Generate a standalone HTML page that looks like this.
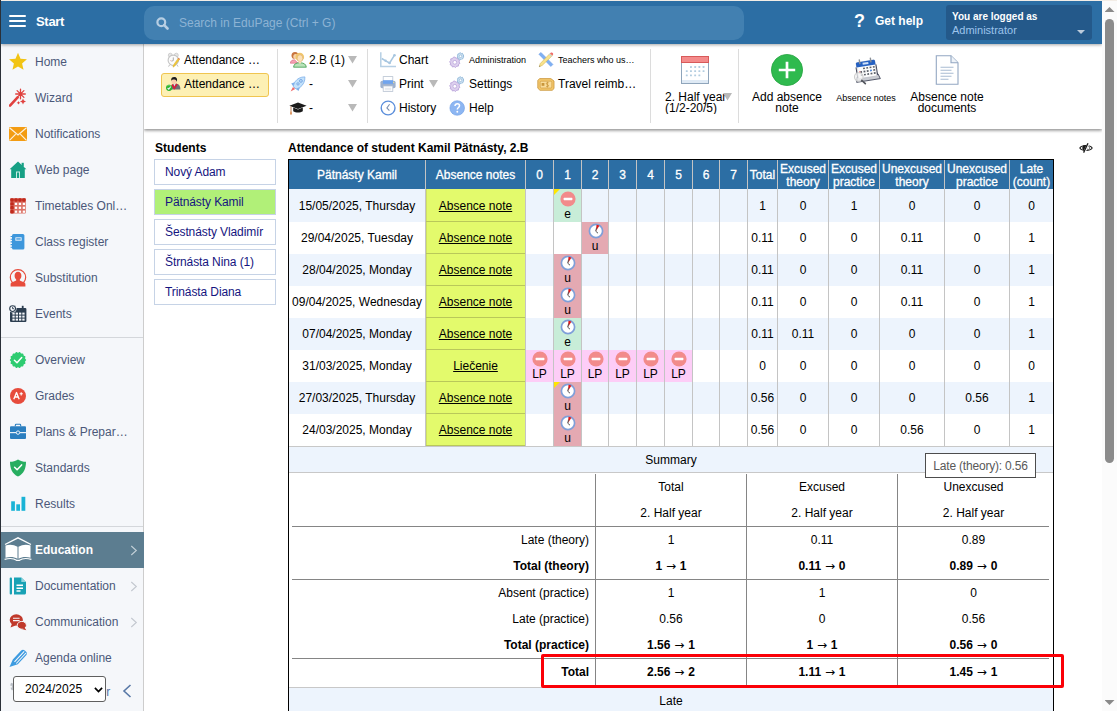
<!DOCTYPE html>
<html lang="en">
<head>
<meta charset="utf-8">
<title>EduPage - Attendance</title>
<style>
*{box-sizing:border-box;margin:0;padding:0}
html,body{width:1117px;height:711px;overflow:hidden;background:#fff}
body{font-family:"Liberation Sans",sans-serif;font-size:12px;color:#000;position:relative}
.abs{position:absolute}
#edgeL{left:0;top:0;width:1px;height:711px;background:#2a3038;z-index:50}
#edgeT{left:1px;top:0;width:1116px;height:1px;background:#f3ede6;z-index:50}
/* header */
#hdr{left:1px;top:1px;width:1101px;height:43px;background:#2c6ea4;z-index:20;box-shadow:0 1px 3px rgba(0,0,0,.35)}
#hdr .ham{left:8px;top:14px;width:17px;height:2px;background:#fff;box-shadow:0 5px 0 #fff,0 10px 0 #fff;border-radius:1px}
#hdr .start{left:35px;top:12.500px;font-weight:bold;font-size:13px;color:#fff;letter-spacing:-.3px;line-height:16px}
#srch{left:143px;top:5px;width:600px;height:34px;border-radius:10px;background:#4280b1}
#srch .ph{left:35px;top:9px;font-size:12px;line-height:16px;color:#8db3d4}
#help{left:853px;top:12px;color:#fff;font-weight:bold;font-size:12px;line-height:16px}
#qm{left:853px;top:9px;color:#fff;font-weight:bold;font-size:18px;line-height:22px}
#user{left:945px;top:4px;width:146px;height:35px;background:#24598a;border-radius:3px}
#user .l1{left:6px;top:4.500px;color:#fff;font-weight:bold;font-size:10px;line-height:13px}
#user .l2{left:6px;top:18px;color:#9cc4ec;font-size:11px;line-height:14px}
#user .car{left:130.500px;top:24.500px;width:0;height:0;border:4px solid transparent;border-top:4.500px solid #bccbdb;border-bottom:0}
/* scrollbar */
#sb{left:1102px;top:0;width:15px;height:711px;background:#fbfbfb;z-index:30}
#sb .thumb{left:3px;top:19px;width:9px;height:444px;background:#8b8b8b;border-radius:4.5px}
#sb .up{left:2.500px;top:7px;width:10px;height:5px;background:#8a8a8a;clip-path:polygon(50% 0,100% 100%,0 100%)}
#sb .dn{left:2.500px;top:700px;width:10px;height:5px;background:#8a8a8a;clip-path:polygon(0 0,100% 0,50% 100%)}
/* sidebar */
#side{left:1px;top:44px;width:143px;height:667px;background:#f5f7fa;border-right:1px solid #cdcdcd;z-index:10}
.mi{position:absolute;left:0;width:142px;height:36px}
.mi .t{position:absolute;left:34px;top:10px;font-size:12px;line-height:16px;color:#4b5879;white-space:nowrap}
.mi svg{position:absolute;left:8px;top:8px;width:20px;height:20px}
#edu svg{left:3px;top:5px;width:28px;height:25px}
.mi svg.ch,#edu svg.ch{left:129px;top:13px;width:8px;height:11px}
#edu{width:143px}
.sep{position:absolute;left:0;width:142px;height:1px;background:#d4d7db}
#edu{background:#5c7d90}
#edu .t{color:#fff;font-weight:bold}
/* toolbar */
#tb{left:144px;top:44px;width:958px;height:85px;background:#fff;z-index:9;box-shadow:0 1.500px 3px rgba(0,0,0,.45)}
.vs{position:absolute;top:5px;width:1px;height:74px;background:#dcdcdc}
.tbi{position:absolute;font-size:12px;line-height:16px;white-space:nowrap;color:#000}
.tbi.s{font-size:9px}
.dd{position:absolute;width:9px;height:7.500px;background:#b9b9b9;clip-path:polygon(0 0,100% 0,50% 100%)}
.ic{position:absolute;z-index:2}
.big{position:absolute;font-size:12px;line-height:11px;text-align:center;color:#000}
.big.s{font-size:9px}
.stu{position:absolute;left:10px;width:122px;height:26px;border:1px solid #c6d3e6;background:#fff;color:#151580;font-size:12px;line-height:16px;padding:4px 0 0 10px;white-space:nowrap;letter-spacing:-.1px}
.stu.sel{background:#b1f078}
#frame{position:absolute;left:144px;top:32px;width:766px;height:560px;border:1px solid #000;border-bottom:0;background:#fff}
#mt{position:absolute;left:145px;top:33px;width:764px;table-layout:fixed;border-collapse:separate;border-spacing:0;font-size:12px}
#mt th{height:29px;background:#2c6ea4;color:#fff;font-weight:normal;font-size:12px;line-height:13px;border-right:1px solid #c4c4c4;text-align:center;vertical-align:middle;padding:2px 0 0;-webkit-text-stroke:.3px #fff;white-space:nowrap;overflow:hidden}
#mt th:last-child,#mt td:last-child{border-right:0}
#mt tbody tr:first-child td{height:33px}
#mt tbody tr:first-child td.m .i16{top:2px}
#mt tbody tr:first-child td.m span{top:18px}
#mt td{height:32px;border-right:1px solid #c4c4c4;text-align:center;vertical-align:middle;padding:0;line-height:14px;white-space:nowrap;position:relative;overflow:hidden}
#mt tr.o td{background:#edf4fd}
#mt tr.e td{background:#fff}
#mt td.y{background:#e3fa6c !important;box-shadow:inset 0 -1px 0 #b9c85a,inset 1px 0 0 #cfe062}
#mt td.y a{text-decoration:underline;color:#000}
#mt td.m{vertical-align:top}
#mt td.m.g{background:#c8edd8 !important}
#mt td.m.p{background:#e4a9b2 !important}
#mt td.m.l{background:#fdcdf7 !important}
#mt td.m .i16{position:absolute;left:5.500px;top:1px;width:16px;height:16px}
#mt td.m span{position:absolute;left:0;right:0;top:17px;line-height:14px;text-align:center}
#mt td.m .tri{position:absolute;left:0;top:0;width:0;height:0;border-top:6px solid #ffe600;border-right:6px solid transparent}
.band{position:absolute;left:145px;width:764px;height:27px;background:#edf4fd;border-top:1px solid #c8c8c8;border-bottom:1px solid #c8c8c8;text-align:center;font-size:12px;line-height:27px}
#st{position:absolute;left:148px;top:347px;width:757px;table-layout:fixed;border-collapse:separate;border-spacing:0;font-size:12px}
#st td{height:26px;padding:0;text-align:center;vertical-align:middle;line-height:14px;border-right:1px solid #858585;white-space:nowrap}
#st td:first-child{text-align:right;padding-right:6px}
#st .ar{font-family:"DejaVu Sans",sans-serif;font-size:12px;font-weight:normal;line-height:10px;margin:0 .5px}
#st td:last-child{border-right:0}
#st tr.b td{font-weight:bold}
#st tr.l td{border-bottom:1px solid #858585;height:27px}
#st tr.h td:first-child{border-bottom-color:#858585}
#st tr.t td{height:28px;padding-bottom:2px}
#tip{position:absolute;left:781px;top:326px;width:111px;height:25px;border:1px solid #4d4d4d;background:#fff;color:#595959;font-size:12px;letter-spacing:-.2px;line-height:24px;text-align:center;white-space:nowrap;z-index:5}
#red{position:absolute;left:397px;top:527px;width:523px;height:34px;border:3px solid #fb0007;border-radius:2px;z-index:6}
#yr{left:12px;top:632px;width:93px;height:26px;background:#fff;border:1px solid #5f5f5f;border-radius:3px;font-size:12px;line-height:24px;padding-left:11px;color:#000;z-index:3;letter-spacing:.05px}
#mt tbody tr:first-child td.m .i16{top:2px}
#mt tbody tr:first-child td.m span{top:18px}
</style>
</head>
<body>
<div id="edgeL" class="abs"></div>
<div id="edgeT" class="abs"></div>

<!-- HEADER -->
<div id="hdr" class="abs">
  <div class="ham abs"></div>
  <div class="start abs">Start</div>
  <div id="srch" class="abs">
    <svg class="abs" style="left:12px;top:11px" width="13" height="13" viewBox="0 0 13 13"><circle cx="5.300" cy="5.300" r="3.900" fill="none" stroke="#b7cee3" stroke-width="2.200"/><path d="M8.200 8.200l3.300 3.300" stroke="#b7cee3" stroke-width="2.600" stroke-linecap="round"/></svg>
    <div class="ph abs">Search in EduPage (Ctrl + G)</div>
  </div>
  <div id="qm" class="abs">?</div>
  <div id="help" class="abs" style="left:874px">Get help</div>
  <div id="user" class="abs">
    <div class="l1 abs">You are logged as</div>
    <div class="l2 abs">Administrator</div>
    <div class="car abs"></div>
  </div>
</div>

<!-- SCROLLBAR -->
<div id="sb" class="abs"><div class="up abs"></div><div class="thumb abs"></div><div class="dn abs"></div></div>

<!-- SIDEBAR -->
<div id="side" class="abs">
  <div class="mi" style="top:0"><svg viewBox="0 0 20 20"><polygon points="9.00,0.80 11.53,6.72 17.94,7.30 13.09,11.53 14.53,17.80 9.00,14.50 3.47,17.80 4.91,11.53 0.06,7.30 6.47,6.72" fill="#f2c414"/></svg><span class="t">Home</span></div>
  <div class="mi" style="top:36px"><svg viewBox="0 0 20 20"><path d="M1 17.6L8.6 9.4" stroke="#e0413f" stroke-width="2.6" stroke-linecap="round"/><g stroke="#e0413f" stroke-width="1.3" stroke-linecap="round"><path d="M11.5 1.2V10.8M6.7 6H16.3M8.1 2.6L14.9 9.4M14.9 2.6L8.1 9.4"/></g><path d="M14 10.5l.9 2.1 2.1.9-2.1.9-.9 2.1-.9-2.1-2.1-.9 2.1-.9zM9.5 13l.6 1.2 1.2.6-1.2.6-.6 1.2-.6-1.2-1.2-.6 1.2-.6z" fill="#e0413f"/></svg><span class="t">Wizard</span></div>
  <div class="mi" style="top:72px"><svg viewBox="0 0 20 20"><rect x="0" y="3" width="18" height="14" rx=".8" fill="#f39c12"/><path d="M.5 3.8L9 11l8.500-7.200M.5 16.400l6.200-6.200M17.500 16.400l-6.200-6.200" fill="none" stroke="#fdf1dc" stroke-width="1.200"/></svg><span class="t">Notifications</span></div>
  <div class="mi" style="top:108px"><svg viewBox="0 0 20 20"><path d="M9 1.500L0.600 9.300H2.200V18H15.800V9.300H17.400Z" fill="#17a085"/><rect x="12.600" y="2.800" width="2.200" height="4" fill="#17a085"/><rect x="7" y="11.500" width="4" height="6.500" fill="#c9ece4"/><rect x="8" y="12.500" width="2" height="5.500" fill="#17a085"/></svg><span class="t">Web page</span></div>
  <div class="mi" style="top:144px"><svg viewBox="0 0 20 20"><rect x="1.200" y="2.200" width="15.600" height="15.400" rx=".8" fill="#dc7468"/><rect x="1.30" y="2.30" width="3.500" height="3.400" rx=".9" fill="#c12a1c"/><rect x="5.25" y="2.30" width="3.500" height="3.400" rx=".9" fill="#c12a1c"/><rect x="9.20" y="2.30" width="3.500" height="3.400" rx=".9" fill="#c12a1c"/><rect x="13.15" y="2.30" width="3.500" height="3.400" rx=".9" fill="#c12a1c"/><rect x="1.30" y="6.20" width="3.500" height="3.400" rx=".9" fill="#c12a1c"/><rect x="5.85" y="6.80" width="2.300" height="2.200" fill="#fff"/><rect x="9.80" y="6.80" width="2.300" height="2.200" fill="#fff"/><rect x="13.75" y="6.80" width="2.300" height="2.200" fill="#fff"/><rect x="1.30" y="10.10" width="3.500" height="3.400" rx=".9" fill="#c12a1c"/><rect x="5.85" y="10.70" width="2.300" height="2.200" fill="#fff"/><rect x="9.80" y="10.70" width="2.300" height="2.200" fill="#fff"/><rect x="13.75" y="10.70" width="2.300" height="2.200" fill="#fff"/><rect x="1.30" y="14.00" width="3.500" height="3.400" rx=".9" fill="#c12a1c"/><rect x="5.85" y="14.60" width="2.300" height="2.200" fill="#fff"/><rect x="9.80" y="14.60" width="2.300" height="2.200" fill="#fff"/><rect x="13.75" y="14.60" width="2.300" height="2.200" fill="#fff"/></svg><span class="t">Timetables Onl&hellip;</span></div>
  <div class="mi" style="top:180px"><svg viewBox="0 0 20 20"><rect x="3" y="2" width="12.400" height="15.500" rx="1.500" fill="#3d97dc"/><rect x="6.300" y="5.300" width="6.400" height="3.400" rx=".5" fill="#dcecf9"/><rect x="7.300" y="6.300" width="4.400" height="1.300" fill="#3d97dc"/><g stroke="#3d97dc" stroke-width="1.100"><path d="M1.600 4.500h2M1.600 7.200h2M1.600 9.900h2M1.600 12.600h2M1.600 15.300h2"/></g></svg><span class="t">Class register</span></div>
  <div class="mi" style="top:216px"><svg viewBox="0 0 20 20"><circle cx="9" cy="9.300" r="7.700" fill="none" stroke="#e74c3c" stroke-width="1.200"/><path d="M9 3.800c2.200 0 3.400 1.700 3.400 3.900 0 1.700-.7 3-1.600 3.700v1.100l4.500 2c.8.400 1.100 1.100 1.100 2v2.300H1.600v-2.300c0-.9.300-1.600 1.100-2l4.500-2v-1.100C6.300 10.700 5.600 9.400 5.600 7.700c0-2.200 1.200-3.900 3.400-3.900z" fill="#e74c3c"/><rect x="0" y="18.700" width="20" height="1.300" fill="#f5f7fa"/></svg><span class="t">Substitution</span></div>
  <div class="mi" style="top:252px"><svg viewBox="0 0 20 20"><rect x="1" y="4" width="16.400" height="14" rx="1" fill="#2c3e50"/><rect x="5" y="1.800" width="1.800" height="4" fill="#2c3e50"/><rect x="12.800" y="1.800" width="1.800" height="4" fill="#2c3e50"/><rect x="3.4" y="8.6" width="2.300" height="2" fill="#f5f7fa"/><rect x="6.7" y="8.6" width="2.300" height="2" fill="#f5f7fa"/><rect x="10.0" y="8.6" width="2.300" height="2" fill="#f5f7fa"/><rect x="13.3" y="8.6" width="2.300" height="2" fill="#f5f7fa"/><rect x="3.4" y="11.6" width="2.300" height="2" fill="#f5f7fa"/><rect x="6.7" y="11.6" width="2.300" height="2" fill="#f5f7fa"/><rect x="10.0" y="11.6" width="2.300" height="2" fill="#f5f7fa"/><rect x="13.3" y="11.6" width="2.300" height="2" fill="#f5f7fa"/><rect x="3.4" y="14.6" width="2.300" height="2" fill="#f5f7fa"/><rect x="6.7" y="14.6" width="2.300" height="2" fill="#f5f7fa"/><rect x="10.0" y="14.6" width="2.300" height="2" fill="#f5f7fa"/><rect x="13.3" y="14.6" width="2.300" height="2" fill="#f5f7fa"/><circle cx="3.600" cy="4.600" r="3.900" fill="#f5f7fa"/><circle cx="3.600" cy="4.600" r="2.900" fill="none" stroke="#2c3e50" stroke-width="1.100"/><path d="M3.600 2.900V4.700H5" fill="none" stroke="#2c3e50" stroke-width=".9"/></svg><span class="t">Events</span></div>
  <div class="sep" style="top:293px"></div>
  <div class="mi" style="top:298px"><svg viewBox="0 0 20 20"><polygon points="17.15,10.00 17.01,10.45 16.65,10.86 16.28,11.24 16.07,11.61 16.09,12.04 16.27,12.54 16.41,13.07 16.34,13.54 16.02,13.88 15.52,14.10 15.02,14.27 14.67,14.52 14.50,14.92 14.44,15.44 14.34,15.98 14.08,16.37 13.64,16.54 13.10,16.52 12.57,16.46 12.15,16.53 11.82,16.82 11.54,17.27 11.22,17.70 10.81,17.95 10.34,17.90 9.86,17.65 9.41,17.37 9.00,17.25 8.59,17.37 8.14,17.65 7.66,17.90 7.19,17.95 6.78,17.70 6.46,17.27 6.18,16.82 5.85,16.53 5.43,16.46 4.90,16.52 4.36,16.54 3.92,16.37 3.66,15.98 3.56,15.44 3.50,14.92 3.33,14.52 2.98,14.27 2.48,14.10 1.98,13.88 1.66,13.54 1.59,13.07 1.73,12.54 1.91,12.04 1.93,11.61 1.72,11.24 1.35,10.86 0.99,10.45 0.85,10.00 0.99,9.55 1.35,9.14 1.72,8.76 1.93,8.39 1.91,7.96 1.73,7.46 1.59,6.93 1.66,6.46 1.98,6.12 2.48,5.90 2.98,5.73 3.33,5.48 3.50,5.08 3.56,4.56 3.66,4.02 3.92,3.63 4.36,3.46 4.90,3.48 5.43,3.54 5.85,3.47 6.18,3.18 6.46,2.73 6.78,2.30 7.19,2.05 7.66,2.10 8.14,2.35 8.59,2.63 9.00,2.75 9.41,2.63 9.86,2.35 10.34,2.10 10.81,2.05 11.22,2.30 11.54,2.73 11.82,3.18 12.15,3.47 12.57,3.54 13.10,3.48 13.64,3.46 14.08,3.63 14.34,4.02 14.44,4.56 14.50,5.08 14.67,5.48 15.02,5.73 15.52,5.90 16.02,6.12 16.34,6.46 16.41,6.93 16.27,7.46 16.09,7.96 16.07,8.39 16.28,8.76 16.65,9.14 17.01,9.55" fill="#2ecc71"/><path d="M5.400 10.200L8 12.700L12.700 7.600" fill="none" stroke="#fff" stroke-width="1.500" stroke-linecap="round" stroke-linejoin="round"/></svg><span class="t">Overview</span></div>
  <div class="mi" style="top:334px"><svg viewBox="0 0 20 20"><circle cx="9" cy="10" r="8" fill="#e74c3c"/><path d="M4.800 13.300L7.500 6.500L10.200 13.300M5.800 11h3.400" fill="none" stroke="#fff" stroke-width="1.300" stroke-linejoin="round"/><path d="M10.600 7.800h3.200M12.200 6.200v3.200" stroke="#fff" stroke-width="1.100"/></svg><span class="t">Grades</span></div>
  <div class="mi" style="top:370px"><svg viewBox="0 0 20 20"><path d="M6.300 4.300V3.200c0-.5.400-.9.900-.9h3.600c.5 0 .9.400.9.900v1.100" fill="none" stroke="#2b7fc0" stroke-width="1.100"/><rect x="1" y="4.300" width="16" height="12.700" rx="1" fill="#2b7fc0"/><rect x="1" y="10" width="16" height="1.200" fill="#e8f1f9"/><circle cx="9" cy="10.600" r="1.700" fill="#2b7fc0" stroke="#e8f1f9" stroke-width="1"/></svg><span class="t">Plans &amp; Prepar&hellip;</span></div>
  <div class="mi" style="top:406px"><svg viewBox="0 0 20 20"><path d="M9 1.500C11.500 3.200 14.200 3.800 17 3.800C17 10.500 14.800 16 9 18.500C3.200 16 1 10.500 1 3.800C3.800 3.800 6.500 3.200 9 1.500Z" fill="#27ae60"/><path d="M5.600 9.300L8.100 11.800L12.600 6.900" fill="none" stroke="#fff" stroke-width="1.500" stroke-linecap="round" stroke-linejoin="round"/></svg><span class="t">Standards</span></div>
  <div class="mi" style="top:442px"><svg viewBox="0 0 20 20"><rect x="2.200" y="7.300" width="3.700" height="9.500" fill="#1ab3d6"/><rect x="7.300" y="10.300" width="3.700" height="6.500" fill="#1ab3d6"/><rect x="12.500" y="2.800" width="3.800" height="14" fill="#1ab3d6"/></svg><span class="t">Results</span></div>
  <div class="sep" style="top:482px"></div>
  <div class="mi" id="edu" style="top:488px"><svg viewBox="0 0 28 25"><path d="M1 7.500L14 .8L27 7.500" fill="none" stroke="#fff" stroke-width="1.300"/><path d="M1.500 8.500C5.500 7.200 10 7.600 13.500 9.800V21.800C10 19.800 5.500 19.600 1.500 20.800Z" fill="#fff"/><path d="M26.500 8.500C22.500 7.200 18 7.600 14.500 9.800V21.800C18 19.800 22.500 19.600 26.500 20.800Z" fill="#fff"/><path d="M.6 22.300C5 21.200 10 21.400 12.500 23.300H15.500C18 21.400 23 21.200 27.400 22.300" fill="none" stroke="#fff" stroke-width="1.200"/></svg><span class="t">Education</span><svg class="ch" viewBox="0 0 8 11"><path d="M1.300 1L6.300 5.500L1.300 10" fill="none" stroke="#c3d0d8" stroke-width="1.100"/></svg></div>
  <div class="mi" style="top:524px"><svg viewBox="0 0 20 20"><rect x=".7" y="1.400" width="2.300" height="17" rx="1" fill="#18a2b5"/><path d="M5 1.400h7.300l4.700 4.700v10.800c0 .8-.7 1.500-1.500 1.500H5z" fill="#18a2b5"/><path d="M12.300 1.400v4.700h4.700z" fill="#8fd6df"/><path d="M7.500 9.300h6.500M7.500 12.200h6.500M7.500 15h4" stroke="#fff" stroke-width="1.400"/></svg><span class="t">Documentation</span><svg class="ch" viewBox="0 0 8 11"><path d="M1.300 1L6.300 5.500L1.300 10" fill="none" stroke="#c3c8cf" stroke-width="1.100"/></svg></div>
  <div class="mi" style="top:560px"><svg viewBox="0 0 20 20"><ellipse cx="7.300" cy="8" rx="6.600" ry="5.800" fill="#c0392b"/><path d="M3 11.500L1.500 15.500L6.500 13.500Z" fill="#c0392b"/><ellipse cx="12.800" cy="13.300" rx="4.600" ry="3.900" fill="#c0392b" stroke="#f5f7fa" stroke-width="1"/><path d="M15.500 15.500L17.300 18.200L12.800 17Z" fill="#c0392b"/><path d="M4 6.300h6.600M4 8.600h6.600" stroke="#f5f7fa" stroke-width="1.100"/></svg><span class="t">Communication</span><svg class="ch" viewBox="0 0 8 11"><path d="M1.300 1L6.300 5.500L1.300 10" fill="none" stroke="#c3c8cf" stroke-width="1.100"/></svg></div>
  <div class="mi" style="top:596px"><svg viewBox="0 0 20 20"><path d="M3.800 11.500L12.200 2.600c1-1 2.500-1 3.500-.1l1.400 1.300c1 .9 1 2.500.1 3.500L8.800 16.200L.5 19z" fill="#3d9be0"/><path d="M5.500 13.800L15.200 3.300M7.300 15.500L17 5" stroke="#f5f7fa" stroke-width="1.100"/></svg><span class="t">Agenda online</span></div>
  <svg class="abs" style="left:8px;top:634px" width="16" height="16" viewBox="0 0 16 16"><circle cx="8" cy="8" r="5" fill="none" stroke="#b9bec5" stroke-width="3.400" stroke-dasharray="2.200 1.700"/><circle cx="8" cy="8" r="4.300" fill="none" stroke="#b9bec5" stroke-width="1.800"/></svg>
  <div class="abs" style="left:98.500px;top:640px;font-size:12px;line-height:16px;color:#5575a8">or</div>
  <div id="yr" class="abs">2024/2025<svg class="abs" style="left:80px;top:10px" width="9" height="6" viewBox="0 0 9 6"><path d="M.9 .9L4.500 4.600L8.100 .9" fill="none" stroke="#000" stroke-width="1.700"/></svg></div>
  <svg class="abs" style="left:121px;top:640px" width="10" height="14" viewBox="0 0 10 14"><path d="M8.500 1L2 7L8.500 13" fill="none" stroke="#5878a6" stroke-width="1.600"/></svg>
</div>

<!-- TOOLBAR -->
<div id="tb" class="abs">
<!--TBI--><svg class="ic" style="left:22px;top:8px" width="16" height="16" viewBox="0 0 16 16"><circle cx="4.300" cy="3.200" r="2" fill="#e6e6e6" stroke="#bcbcbc" stroke-width=".6"/><circle cx="10.300" cy="3.200" r="2" fill="#e6e6e6" stroke="#bcbcbc" stroke-width=".6"/><circle cx="7.300" cy="8.300" r="5.200" fill="#fbfbfb" stroke="#c4c4c4" stroke-width="1.100"/><path d="M7.300 5.400V8.500L5.500 9.300" fill="none" stroke="#8a8a8a" stroke-width=".7"/><path d="M5.600 8.600h-1.600" stroke="#e7a0a0" stroke-width=".6"/><path d="M3.600 12.800L2.600 14.600M11 12.800L12 14.600" stroke="#bcbcbc" stroke-width="1"/><path d="M12.400 6L13.800 7L8.600 14.200L7 15.200L7.200 13.300Z" fill="#f3c93a" stroke="#c9a01e" stroke-width=".35"/><path d="M12.400 6L13.800 7L13.300 7.700L11.900 6.700Z" fill="#e36a6a"/></svg>
<svg class="ic" style="left:22px;top:32px" width="16" height="16" viewBox="0 0 16 16"><path d="M5 13.600C5 10.200 6 8 8.400 7.800H10.600C13.200 8.200 14.400 10.200 14.400 13.600Z" fill="#6e7073"/><path d="M5.900 8.600L8.300 12L10.900 8" fill="none" stroke="#d81f3c" stroke-width="1.900"/><path d="M7.600 7.800L8.400 10.400L9.600 7.800Z" fill="#e8e8ee"/><g transform="translate(0 .5)"><ellipse cx="8" cy="4.700" rx="2.600" ry="3" fill="#fbd0ae"/><path d="M5.200 4.200C4.800 1.600 6.400.6 8.300.6C10.600.6 11.600 2.400 10.900 5.400C10.600 3.800 9.800 3 8.400 2.900C7 2.800 5.900 3.200 5.200 4.200Z" fill="#1c1c1c"/></g><circle cx="3.100" cy="11.800" r="3.100" fill="#2cb52c"/><path d="M.9 10.400A2.600 2.600 0 0 1 4.800 9.600" fill="none" stroke="#8fd88f" stroke-width=".8"/><path d="M1.600 12L2.800 13.200L4.800 10.500" fill="none" stroke="#eef" stroke-width="1.100"/></svg>
<svg class="ic" style="left:146px;top:7px" width="17" height="17" viewBox="0 0 17 17"><path d="M.3 12.200C.6 9.800 2.200 8.800 4.600 8.800L8 12.200Z" fill="#f5a3b3" stroke="#d9607a" stroke-width=".6"/><circle cx="5" cy="4.600" r="3.500" fill="#c8733d"/><ellipse cx="5.600" cy="5.600" rx="2.300" ry="2.700" fill="#f7d3a8"/><path d="M3.600 16.200C3.900 13 5.800 11.800 9.800 11.800C13.800 11.800 15.900 13 16.300 16.200Z" fill="#b9e3b9" stroke="#3f9a4c" stroke-width=".8"/><circle cx="9.800" cy="6" r="4.300" fill="#f0c56c"/><ellipse cx="10" cy="7.300" rx="2.800" ry="3.500" fill="#fbe0b8" stroke="#d9a860" stroke-width=".5"/><rect x="8.800" y="10.500" width="2.300" height="2" fill="#fbe0b8"/></svg>
<svg class="ic" style="left:146px;top:32px" width="16" height="16" viewBox="0 0 16 16"><path d="M14.900 .9C10.600 .8 7.200 2.600 4.700 6.200L3.200 10.200L6 13L9.900 11.500C13.500 8.800 15.100 5 14.900.9Z" fill="#c3e2fb" stroke="#7fb0ea" stroke-width=".8"/><circle cx="10.900" cy="4.900" r="1.400" fill="#c3e2fb" stroke="#6f9fe0" stroke-width=".9"/><circle cx="8" cy="7.900" r="1.200" fill="#c3e2fb" stroke="#6f9fe0" stroke-width=".8"/><path d="M4.700 6.200L1.200 7.600L3.200 10.200ZM9.900 11.500L8.500 15L6 13Z" fill="#7fb0ea"/><path d="M3 11L.6 15.400L5.200 13.100Z" fill="#ee6e6e"/></svg>
<svg class="ic" style="left:145px;top:58px" width="18" height="13" viewBox="0 0 18 13"><path d="M9 .6L17.600 3.800L9 7L.4 3.800Z" fill="#1b1b1b"/><path d="M4.200 5.600V9.200C6.600 11 11.400 11 13.800 9.200V5.600L9 7.500Z" fill="#1b1b1b"/><path d="M2 4.400V9.300" stroke="#b06a3a" stroke-width=".8"/><path d="M1.300 9.300h1.400l.3 3.300H1z" fill="#d98f5a"/></svg>
<svg class="ic" style="left:236px;top:8px" width="16" height="16" viewBox="0 0 16 16"><path d="M.8 .2V14.600H16" fill="none" stroke="#b6cfe4" stroke-width="1.500"/><path d="M1.800 6.500L5.600 8.800L9.600 11L14.500 3.200" fill="none" stroke="#a7c6e0" stroke-width="1.500" stroke-linejoin="round"/><circle cx="5.600" cy="8.800" r="1.200" fill="#a7c6e0"/><circle cx="9.600" cy="11" r="1.300" fill="#a7c6e0"/><circle cx="14.500" cy="3.200" r="1.300" fill="#a7c6e0"/></svg>
<svg class="ic" style="left:236px;top:32px" width="16" height="16" viewBox="0 0 16 16"><rect x="3.200" y=".6" width="9.600" height="5.400" fill="#fff" stroke="#b9c4d2" stroke-width=".8"/><rect x=".4" y="4.800" width="15.200" height="7.400" rx="1.800" fill="#9db1cf"/><rect x="3" y="4.200" width="10" height="3.600" fill="#6fa4ee"/><rect x="3.200" y="10" width="9.600" height="5.400" fill="#fff" stroke="#b9c4d2" stroke-width=".8"/><path d="M4.800 12.300h6.400M4.800 13.800h6.400" stroke="#d3dae3" stroke-width=".7"/><circle cx="13.700" cy="6.400" r=".6" fill="#f7e68a"/></svg>
<svg class="ic" style="left:236px;top:56px" width="16" height="16" viewBox="0 0 16 16"><circle cx="8.100" cy="8" r="6.900" fill="#fff" stroke="#5b8edb" stroke-width="1.400"/><path d="M9.600 4.300L6.900 8L9.400 10.600" fill="none" stroke="#7b8fb0" stroke-width="1.100"/></svg>
<svg class="ic" style="left:305px;top:8px" width="16" height="16" viewBox="0 0 16 16"><g transform="translate(5.800 10.300)"><path d="M0-5.200L1.300-4.100L3-4.500L3.300-2.800L4.900-2L4.200-.4L5.100 1.100L3.700 2.100L3.600 3.800L1.900 3.900L.7 5.200L-.7 4.200L-2.400 4.700L-3 3.100L-4.600 2.500L-4.200.8L-5.200-.5L-4-1.700L-4.100-3.400L-2.400-3.700L-1.400-5.100Z" fill="#ddd0ee" stroke="#b9a3da" stroke-width=".9"/><circle r="1.900" fill="#fff" stroke="#b9a3da" stroke-width=".8"/></g><g transform="translate(11.500 4.300) scale(.66)"><path d="M0-5.200L1.300-4.100L3-4.500L3.300-2.800L4.900-2L4.200-.4L5.100 1.100L3.700 2.100L3.600 3.800L1.900 3.900L.7 5.200L-.7 4.200L-2.400 4.700L-3 3.100L-4.600 2.500L-4.200.8L-5.200-.5L-4-1.700L-4.100-3.400L-2.400-3.700L-1.400-5.100Z" fill="#cfe2f2" stroke="#8db6d8" stroke-width="1.300"/><circle r="2" fill="#fff" stroke="#8db6d8" stroke-width="1.100"/></g></svg>
<svg class="ic" style="left:305px;top:32px" width="16" height="16" viewBox="0 0 16 16"><g transform="translate(5.800 10.300)"><path d="M0-5.200L1.300-4.100L3-4.500L3.300-2.800L4.900-2L4.200-.4L5.100 1.100L3.700 2.100L3.600 3.800L1.900 3.900L.7 5.200L-.7 4.200L-2.400 4.700L-3 3.100L-4.600 2.500L-4.200.8L-5.200-.5L-4-1.700L-4.100-3.400L-2.400-3.700L-1.400-5.100Z" fill="#ddd0ee" stroke="#b9a3da" stroke-width=".9"/><circle r="1.900" fill="#fff" stroke="#b9a3da" stroke-width=".8"/></g><g transform="translate(11.500 4.300) scale(.66)"><path d="M0-5.200L1.300-4.100L3-4.500L3.300-2.800L4.900-2L4.200-.4L5.100 1.100L3.700 2.100L3.600 3.800L1.900 3.900L.7 5.200L-.7 4.200L-2.400 4.700L-3 3.100L-4.600 2.500L-4.200.8L-5.200-.5L-4-1.700L-4.100-3.400L-2.400-3.700L-1.400-5.100Z" fill="#cfe2f2" stroke="#8db6d8" stroke-width="1.300"/><circle r="2" fill="#fff" stroke="#8db6d8" stroke-width="1.100"/></g></svg>
<svg class="ic" style="left:305px;top:56px" width="16" height="16" viewBox="0 0 16 16"><circle cx="8.200" cy="8" r="7.300" fill="#8db6f2" stroke="#6f9fe6" stroke-width=".6"/><path d="M6 6.100C6 4.600 7 3.800 8.300 3.800C9.600 3.800 10.500 4.600 10.500 5.800C10.500 7.500 8.300 7.500 8.300 9.500" fill="none" stroke="#fff" stroke-width="1.500"/><circle cx="8.300" cy="11.800" r=".95" fill="#fff"/></svg>
<svg class="ic" style="left:394px;top:8px" width="16" height="16" viewBox="0 0 16 16"><path d="M.8 2.200L3 .4L15 12.400L12.800 14.600Z" fill="#7fb0f3" stroke="#5d93e0" stroke-width=".4"/><path d="M12 1.400L14.400 3.600L4.200 13.400L1.300 14.700L2.200 11.600Z" fill="#f9e38c" stroke="#cfae45" stroke-width=".5"/><path d="M12 1.400L13 .6C13.600.2 14.300.4 14.800 1C15.300 1.600 15.400 2.200 15 2.800L14.400 3.600Z" fill="#ef6b6b"/><path d="M11.200 2.200L13.600 4.400" stroke="#bfd2e6" stroke-width="1.100"/><path d="M1.300 14.700L2.400 14.200L1.700 13.500Z" fill="#444"/></svg>
<svg class="ic" style="left:393px;top:34px" width="18" height="13" viewBox="0 0 18 13"><path d="M2.600 .6H13.800L17 3V10.600L15.200 12.300H3L.8 10.200V2.400Z" fill="#f3c76c" stroke="#c9963a" stroke-width=".8"/><rect x="3.200" y="3.200" width="11.600" height="6.800" rx="1" fill="#f9dc9a" stroke="#c9963a" stroke-width=".6"/><rect x="4.600" y="5" width="2.800" height="2.800" fill="#c9963a"/><path d="M11.600 4.800C10.600 4.300 9.300 4.600 9.300 5.600C9.300 6.800 11.600 6.400 11.600 7.700C11.600 8.700 10.200 8.900 9.200 8.300M10.400 3.800V9.400" fill="none" stroke="#c9963a" stroke-width=".8"/></svg>
<svg class="ic" style="left:537px;top:12px" width="28" height="28" viewBox="0 0 28 28"><rect x=".5" y="6.500" width="27" height="21" fill="#fff" stroke="#8fa5bb" stroke-width="1"/><rect x="1" y="24" width="26" height="3" fill="#dfeaf5"/><rect x=".5" y=".5" width="27" height="6" fill="#f48b8b" stroke="#d85a5a" stroke-width="1"/><rect x="9" y="10" width="1.900" height="1.900" rx=".4" fill="#b3cde0"/><rect x="13.2" y="10" width="1.900" height="1.900" rx=".4" fill="#b3cde0"/><rect x="17.4" y="10" width="1.900" height="1.900" rx=".4" fill="#b3cde0"/><rect x="21.6" y="10" width="1.900" height="1.900" rx=".4" fill="#b3cde0"/><rect x="4.8" y="14.2" width="1.900" height="1.900" rx=".4" fill="#b3cde0"/><rect x="9" y="14.2" width="1.900" height="1.900" rx=".4" fill="#b3cde0"/><rect x="13.2" y="14.2" width="1.900" height="1.900" rx=".4" fill="#b3cde0"/><rect x="17.4" y="14.2" width="1.900" height="1.900" rx=".4" fill="#b3cde0"/><rect x="21.6" y="14.2" width="1.900" height="1.900" rx=".4" fill="#b3cde0"/><rect x="4.8" y="18.4" width="1.900" height="1.900" rx=".4" fill="#b3cde0"/><rect x="9" y="18.4" width="1.900" height="1.900" rx=".4" fill="#b3cde0"/><rect x="13.2" y="18.4" width="1.900" height="1.900" rx=".4" fill="#b3cde0"/><rect x="17.4" y="18.4" width="1.900" height="1.900" rx=".4" fill="#b3cde0"/></svg>
<svg class="ic" style="left:627px;top:10px" width="32" height="32" viewBox="0 0 32 32"><circle cx="16" cy="16" r="15.600" fill="#2fba4e" stroke="#27a443" stroke-width=".8"/><path d="M16 7.800V24.200M7.800 16H24.200" stroke="#fff" stroke-width="2.700"/></svg>
<svg class="ic" style="left:708px;top:12px" width="29" height="30" viewBox="0 0 29 30"><g transform="rotate(-9 15 15)"><path d="M4.200 19.500L25.400 19.500L27 24.600L3 24.600Z" fill="#c9ccd2" stroke="#4a4f62" stroke-width=".9"/><rect x="5.400" y="5.200" width="18.800" height="16.200" rx="1" fill="#fcfcfc" stroke="#b9bcc4" stroke-width=".7"/><path d="M4.700 9.800V20.500M24.900 9.800V20.500" stroke="#3f4458" stroke-width=".9"/><path d="M5.200 6.200c0-.7.500-1.200 1.200-1.200H23.200c.7 0 1.200.5 1.200 1.200V9.800H5.200Z" fill="#2460c2"/><rect x="11.800" y="6.200" width="5.800" height="2" fill="#cfe0f7"/><rect x="8.400" y="2.200" width="1.400" height="5" rx=".7" fill="#8b9097"/><rect x="19.600" y="2.200" width="1.400" height="5" rx=".7" fill="#8b9097"/><rect x="11.5" y="11.2" width="1.800" height="1.600" fill="#5a5f68"/><rect x="14.8" y="11.2" width="1.800" height="1.600" fill="#5a5f68"/><rect x="18.1" y="11.2" width="1.800" height="1.600" fill="#5a5f68"/><rect x="21.4" y="11.2" width="1.800" height="1.600" fill="#5a5f68"/><rect x="8.2" y="14.3" width="1.800" height="1.600" fill="#5a5f68"/><rect x="11.5" y="14.3" width="1.800" height="1.600" fill="#5a5f68"/><rect x="14.8" y="14.3" width="1.800" height="1.600" fill="#5a5f68"/><rect x="18.1" y="14.3" width="1.800" height="1.600" fill="#4f86d6"/><rect x="21.4" y="14.3" width="1.800" height="1.600" fill="#5a5f68"/><rect x="8.2" y="17.4" width="1.800" height="1.600" fill="#5a5f68"/><rect x="11.5" y="17.4" width="1.800" height="1.600" fill="#5a5f68"/><rect x="14.8" y="17.4" width="1.800" height="1.600" fill="#5a5f68"/><rect x="18.1" y="17.4" width="1.800" height="1.600" fill="#5a5f68"/><rect x="21.4" y="17.4" width="1.800" height="1.600" fill="#5a5f68"/><rect x="7" y="14.300" width="1.300" height="1.300" fill="#e86a6a"/></g><circle cx="6.800" cy="21" r="4.300" fill="rgba(245,245,245,.7)" stroke="#cdcdcd" stroke-width="1.100"/><path d="M9.800 24.300L13.300 27.600" stroke="#55585f" stroke-width="1.700" stroke-linecap="round"/></svg>
<svg class="ic" style="left:791px;top:11px" width="24" height="30" viewBox="0 0 24 30"><path d="M1.300 .8H16L23 7.800V29.200H1.300Z" fill="#fff" stroke="#93a7c2" stroke-width="1.100"/><path d="M16 .8V7.800H23" fill="#eef3f9" stroke="#93a7c2" stroke-width="1.100"/><path d="M5.500 12.200H18.500M5.500 15.200H16.500M5.500 18.200H18.500M5.500 21.200H16.500M5.500 24.200H13.500" stroke="#a9bcd2" stroke-width="1.100"/></svg><!--/TBI-->
  <!-- group 1 -->
  <div class="tbi" style="left:40px;top:8px">Attendance &hellip;</div>
  <div class="abs" style="left:17px;top:29px;width:108px;height:24px;background:#fdf0b4;border:1px solid #f0c550;border-radius:3px"></div>
  <div class="tbi" style="left:40px;top:32px">Attendance &hellip;</div>
  <div class="vs" style="left:133px"></div>
  <!-- group 2 -->
  <div class="tbi" style="left:165px;top:8px">2.B (1)</div>
  <div class="tbi" style="left:165px;top:32px">-</div>
  <div class="tbi" style="left:165px;top:56px">-</div>
  <div class="dd" style="left:204px;top:12px"></div>
  <div class="dd" style="left:204px;top:36px"></div>
  <div class="dd" style="left:204px;top:60px"></div>
  <div class="vs" style="left:223px"></div>
  <!-- group 3 -->
  <div class="tbi" style="left:255px;top:8px">Chart</div>
  <div class="tbi" style="left:255px;top:32px">Print</div>
  <div class="dd" style="left:285px;top:36px"></div>
  <div class="tbi" style="left:255px;top:56px">History</div>
  <div class="tbi s" style="left:325px;top:8px">Administration</div>
  <div class="tbi" style="left:325px;top:32px">Settings</div>
  <div class="tbi" style="left:325px;top:56px">Help</div>
  <div class="tbi s" style="left:414px;top:8px">Teachers who us&hellip;</div>
  <div class="tbi" style="left:414px;top:32px">Travel reimb&hellip;</div>
  <div class="vs" style="left:506px"></div>
  <!-- group 4 -->
  <div class="big" style="left:521px;top:48px;width:61px;text-align:left;overflow:hidden;white-space:nowrap">2. Half year<br>(1/2-20/5)</div>
  <div class="dd" style="left:579px;top:49px"></div>
  <div class="vs" style="left:594px"></div>
  <div class="big" style="left:598px;top:48px;width:90px">Add absence<br>note</div>
  <div class="big s" style="left:677px;top:49px;width:90px">Absence notes</div>
  <div class="big" style="left:753px;top:48px;width:100px">Absence note<br>documents</div>
</div>

<!-- CONTENT -->
<div id="content" class="abs" style="left:144px;top:127px;width:957px;height:584px">
  <div class="abs" style="left:11px;top:13px;font-weight:bold;font-size:12px;line-height:16px">Students</div>
  <div class="stu" style="top:32px">Nov&yacute; Adam</div>
  <div class="stu sel" style="top:62px">P&auml;tn&aacute;sty Kamil</div>
  <div class="stu" style="top:92px">&Scaron;estn&aacute;sty Vladim&iacute;r</div>
  <div class="stu" style="top:122px">&Scaron;trn&aacute;sta Nina (1)</div>
  <div class="stu" style="top:152px">Trin&aacute;sta Diana</div>
  <div class="abs" style="left:144px;top:13px;font-weight:bold;font-size:12px;line-height:16px;white-space:nowrap">Attendance of student Kamil P&auml;tn&aacute;sty, 2.B</div>
  <div id="frame"></div>
<svg class="abs" style="left:935px;top:16px" width="14" height="10" viewBox="0 0 14 10"><path d="M.8 5C3 1.700 11 1.700 13.200 5C11 8.300 3 8.300.8 5Z" fill="#fff" stroke="#1a1a1a" stroke-width="1.100"/><path d="M4.800 2.300C2.800 3 2.800 7 4.800 7.700L7.700 2.200Z" fill="#1a1a1a"/><circle cx="9.200" cy="5" r="1.500" fill="none" stroke="#555" stroke-width=".7"/><path d="M9.600 .3L5.200 9.600" stroke="#fff" stroke-width="2.200"/><path d="M9 .3L4.600 9.600" stroke="#1a1a1a" stroke-width="1.300"/></svg>
<!--MAIN-->
<table id="mt" cellspacing="0" cellpadding="0"><colgroup><col style="width:137px"><col style="width:100px"><col style="width:28px"><col style="width:28px"><col style="width:27px"><col style="width:28px"><col style="width:28px"><col style="width:28px"><col style="width:27px"><col style="width:28px"><col style="width:30px"><col style="width:51px"><col style="width:51px"><col style="width:65px"><col style="width:65px"><col style="width:43px"></colgroup>
<thead><tr><th>P&auml;tn&aacute;sty Kamil</th><th>Absence notes</th><th>0</th><th>1</th><th>2</th><th>3</th><th>4</th><th>5</th><th>6</th><th>7</th><th>Total</th><th>Excused<br>theory</th><th>Excused<br>practice</th><th>Unexcused<br>theory</th><th>Unexcused<br>practice</th><th>Late<br>(count)</th></tr></thead><tbody>
<tr class="o"><td class="d">15/05/2025, Thursday</td><td class="y"><a>Absence note</a></td><td></td><td class="m g"><i class="tri"></i><svg class="i16" viewBox="0 0 16 16"><circle cx="8" cy="8" r="7.6" fill="#f28b8b"/><rect x="3.6" y="6.8" width="8.8" height="2.4" rx=".6" fill="#fff"/></svg><span>e</span></td><td></td><td></td><td></td><td></td><td></td><td></td><td>1</td><td>0</td><td>1</td><td>0</td><td>0</td><td>0</td></tr>
<tr class="e"><td class="d">29/04/2025, Tuesday</td><td class="y"><a>Absence note</a></td><td></td><td></td><td class="m p"><svg class="i16" viewBox="0 0 16 16"><circle cx="8" cy="8" r="6.6" fill="#fff" stroke="#7f9fd9" stroke-width="1.7"/><path d="M8 8L8.500 1.800A6.200 6.200 0 0 1 11.400 2.800Z" fill="#e01818"/><path d="M8.6 4.6L7.7 8.2L10 10.2" fill="none" stroke="#555" stroke-width="1"/></svg><span>u</span></td><td></td><td></td><td></td><td></td><td></td><td>0.11</td><td>0</td><td>0</td><td>0.11</td><td>0</td><td>1</td></tr>
<tr class="o"><td class="d">28/04/2025, Monday</td><td class="y"><a>Absence note</a></td><td></td><td class="m p"><svg class="i16" viewBox="0 0 16 16"><circle cx="8" cy="8" r="6.6" fill="#fff" stroke="#7f9fd9" stroke-width="1.7"/><path d="M8 8L8.500 1.800A6.200 6.200 0 0 1 11.400 2.800Z" fill="#e01818"/><path d="M8.6 4.6L7.7 8.2L10 10.2" fill="none" stroke="#555" stroke-width="1"/></svg><span>u</span></td><td></td><td></td><td></td><td></td><td></td><td></td><td>0.11</td><td>0</td><td>0</td><td>0.11</td><td>0</td><td>1</td></tr>
<tr class="e"><td class="d">09/04/2025, Wednesday</td><td class="y"><a>Absence note</a></td><td></td><td class="m p"><svg class="i16" viewBox="0 0 16 16"><circle cx="8" cy="8" r="6.6" fill="#fff" stroke="#7f9fd9" stroke-width="1.7"/><path d="M8 8L8.500 1.800A6.200 6.200 0 0 1 11.400 2.800Z" fill="#e01818"/><path d="M8.6 4.6L7.7 8.2L10 10.2" fill="none" stroke="#555" stroke-width="1"/></svg><span>u</span></td><td></td><td></td><td></td><td></td><td></td><td></td><td>0.11</td><td>0</td><td>0</td><td>0.11</td><td>0</td><td>1</td></tr>
<tr class="o"><td class="d">07/04/2025, Monday</td><td class="y"><a>Absence note</a></td><td></td><td class="m g"><svg class="i16" viewBox="0 0 16 16"><circle cx="8" cy="8" r="6.6" fill="#fff" stroke="#7f9fd9" stroke-width="1.7"/><path d="M8 8L8.500 1.800A6.200 6.200 0 0 1 11.400 2.800Z" fill="#e01818"/><path d="M8.6 4.6L7.7 8.2L10 10.2" fill="none" stroke="#555" stroke-width="1"/></svg><span>e</span></td><td></td><td></td><td></td><td></td><td></td><td></td><td>0.11</td><td>0.11</td><td>0</td><td>0</td><td>0</td><td>1</td></tr>
<tr class="e"><td class="d">31/03/2025, Monday</td><td class="y"><a>Lie&#269;enie</a></td><td class="m l"><svg class="i16" viewBox="0 0 16 16"><circle cx="8" cy="8" r="7.6" fill="#f28b8b"/><rect x="3.6" y="6.8" width="8.8" height="2.4" rx=".6" fill="#fff"/></svg><span>LP</span></td><td class="m l"><svg class="i16" viewBox="0 0 16 16"><circle cx="8" cy="8" r="7.6" fill="#f28b8b"/><rect x="3.6" y="6.8" width="8.8" height="2.4" rx=".6" fill="#fff"/></svg><span>LP</span></td><td class="m l"><svg class="i16" viewBox="0 0 16 16"><circle cx="8" cy="8" r="7.6" fill="#f28b8b"/><rect x="3.6" y="6.8" width="8.8" height="2.4" rx=".6" fill="#fff"/></svg><span>LP</span></td><td class="m l"><svg class="i16" viewBox="0 0 16 16"><circle cx="8" cy="8" r="7.6" fill="#f28b8b"/><rect x="3.6" y="6.8" width="8.8" height="2.4" rx=".6" fill="#fff"/></svg><span>LP</span></td><td class="m l"><svg class="i16" viewBox="0 0 16 16"><circle cx="8" cy="8" r="7.6" fill="#f28b8b"/><rect x="3.6" y="6.8" width="8.8" height="2.4" rx=".6" fill="#fff"/></svg><span>LP</span></td><td class="m l"><svg class="i16" viewBox="0 0 16 16"><circle cx="8" cy="8" r="7.6" fill="#f28b8b"/><rect x="3.6" y="6.8" width="8.8" height="2.4" rx=".6" fill="#fff"/></svg><span>LP</span></td><td></td><td></td><td>0</td><td>0</td><td>0</td><td>0</td><td>0</td><td>0</td></tr>
<tr class="o"><td class="d">27/03/2025, Thursday</td><td class="y"><a>Absence note</a></td><td></td><td class="m p"><i class="tri"></i><svg class="i16" viewBox="0 0 16 16"><circle cx="8" cy="8" r="6.6" fill="#fff" stroke="#7f9fd9" stroke-width="1.7"/><path d="M8 8L8.500 1.800A6.200 6.200 0 0 1 11.400 2.800Z" fill="#e01818"/><path d="M8.6 4.6L7.7 8.2L10 10.2" fill="none" stroke="#555" stroke-width="1"/></svg><span>u</span></td><td></td><td></td><td></td><td></td><td></td><td></td><td>0.56</td><td>0</td><td>0</td><td>0</td><td>0.56</td><td>1</td></tr>
<tr class="e"><td class="d">24/03/2025, Monday</td><td class="y"><a>Absence note</a></td><td></td><td class="m p"><svg class="i16" viewBox="0 0 16 16"><circle cx="8" cy="8" r="6.6" fill="#fff" stroke="#7f9fd9" stroke-width="1.7"/><path d="M8 8L8.500 1.800A6.200 6.200 0 0 1 11.400 2.800Z" fill="#e01818"/><path d="M8.6 4.6L7.7 8.2L10 10.2" fill="none" stroke="#555" stroke-width="1"/></svg><span>u</span></td><td></td><td></td><td></td><td></td><td></td><td></td><td>0.56</td><td>0</td><td>0</td><td>0.56</td><td>0</td><td>1</td></tr>
</tbody></table>
<!--/MAIN-->
<!--SUMM-->
<div class="band" style="top:319px">Summary</div>
<table id="st" cellspacing="0" cellpadding="0"><colgroup><col style="width:304px"><col style="width:151px"><col style="width:151px"><col style="width:151px"></colgroup>
<tbody>
<tr><td></td><td>Total</td><td>Excused</td><td>Unexcused</td></tr>
<tr class="l h"><td></td><td>2. Half year</td><td>2. Half year</td><td>2. Half year</td></tr>
<tr><td>Late (theory)</td><td>1</td><td>0.11</td><td>0.89</td></tr>
<tr class="l b"><td>Total (theory)</td><td>1 <span class="ar">&rarr;</span> 1</td><td>0.11 <span class="ar">&rarr;</span> 0</td><td>0.89 <span class="ar">&rarr;</span> 0</td></tr>
<tr><td>Absent (practice)</td><td>1</td><td>1</td><td>0</td></tr>
<tr><td>Late (practice)</td><td>0.56</td><td>0</td><td>0.56</td></tr>
<tr class="l b"><td>Total (practice)</td><td>1.56 <span class="ar">&rarr;</span> 1</td><td>1 <span class="ar">&rarr;</span> 1</td><td>0.56 <span class="ar">&rarr;</span> 0</td></tr>
<tr class="b t"><td>Total</td><td>2.56 <span class="ar">&rarr;</span> 2</td><td>1.11 <span class="ar">&rarr;</span> 1</td><td>1.45 <span class="ar">&rarr;</span> 1</td></tr>
</tbody></table>
<div class="band" style="top:560px">Late</div>
<div id="tip">Late (theory): 0.56</div>
<div id="red"></div>
<!--/SUMM-->
</div>
</body>
</html>
